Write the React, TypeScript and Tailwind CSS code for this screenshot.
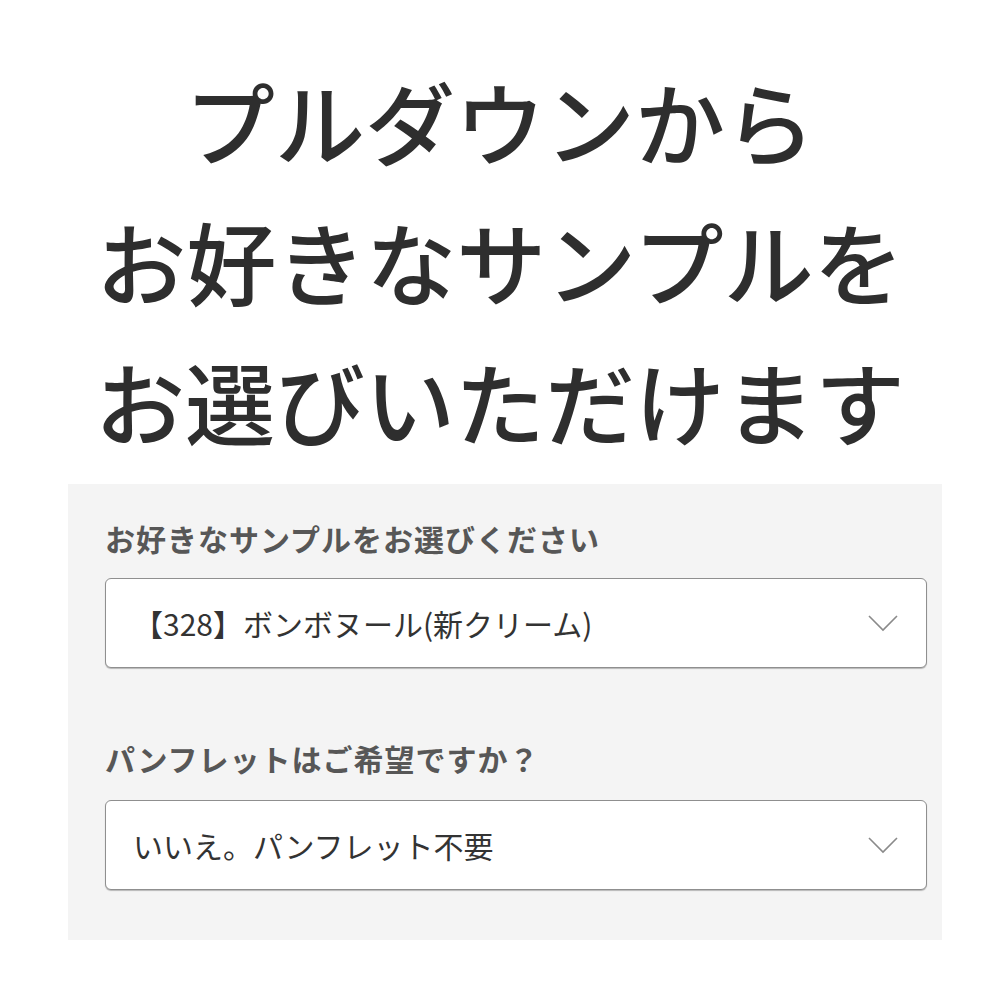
import React from "react"

const jp = { fontFamily: '"Noto Sans CJK JP", "Noto Sans", sans-serif' }

const Chevron = () => (
    <svg width="30" height="18" viewBox="0 0 30 18" fill="none">
        <polyline points="1,2 15,16 29,2" stroke="#8a8a8a" strokeWidth="1.6" />
    </svg>
)

const SelectBox = ({ value }: { value: string }) => (
    <div className="h-[90px] w-[822px] bg-white border-[1.5px] border-[#8f8f8f] rounded-[6px] flex items-center pl-[27px] pr-[28px] justify-between shadow-[0_1px_1px_rgba(0,0,0,0.25)]">
        <span className="text-[30px] text-[#333] leading-none">{value}</span>
        <Chevron />
    </div>
)

export default function App() {
    return (
        <div style={jp} className="w-[1000px] h-[1000px] bg-white flex flex-col items-center">
            <div className="pt-[50px] flex flex-col items-center text-[90px] leading-[140px] text-[#2e2e2e] font-medium">
                <p>プルダウンから</p>
                <p>お好きなサンプルを</p>
                <p>お選びいただけます</p>
            </div>
            <div className="mt-[14px] w-[874px] h-[456px] bg-[#f4f4f4] self-start ml-[68px] pl-[37px] pt-[34px] flex flex-col">
                <p className="h-[40px] leading-[40px] text-[30px] font-bold text-[#575757] tracking-[1px]">お好きなサンプルをお選びください</p>
                <div className="mt-[20px]">
                    <SelectBox value="【328】ボンボヌール(新クリーム)" />
                </div>
                <p className="mt-[70px] h-[40px] leading-[40px] text-[30px] font-bold text-[#575757] tracking-[1px]">パンフレットはご希望ですか？</p>
                <div className="mt-[22px]">
                    <SelectBox value="いいえ。パンフレット不要" />
                </div>
            </div>
        </div>
    )
}
